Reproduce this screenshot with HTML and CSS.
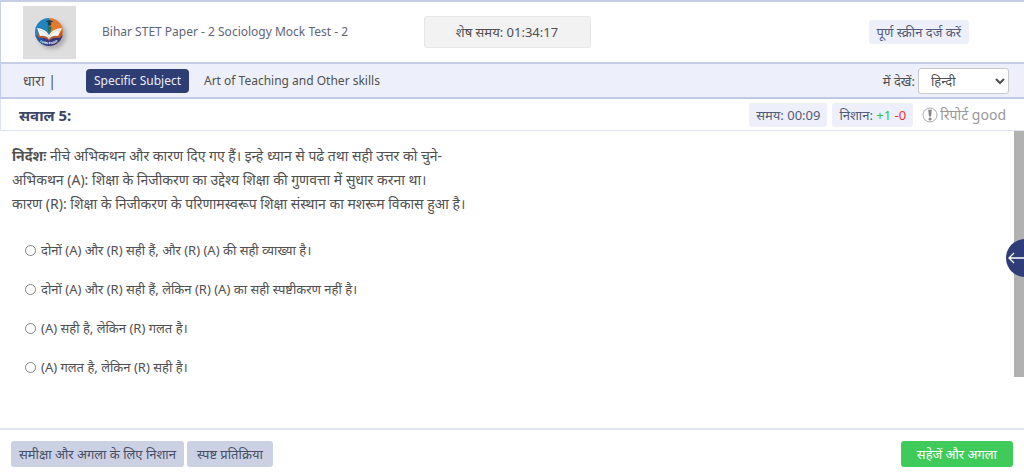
FILE: index.html
```html
<!DOCTYPE html>
<html lang="hi">
<head>
<meta charset="utf-8">
<meta name="viewport" content="width=device-width, initial-scale=1">
<title>Bihar STET Paper - 2 Sociology Mock Test - 2</title>
<link rel="stylesheet" href="styles.css">
</head>
<body>
<header class="topbar">
  <div class="brand">
    <svg class="logo" viewBox="0 0 53 53" role="img" aria-label="Logo">
      <defs>
        <clipPath id="disc"><circle cx="26" cy="26" r="14"/></clipPath>
        <filter id="soft" x="-50%" y="-50%" width="200%" height="200%"><feGaussianBlur stdDeviation="2"/></filter>
        <linearGradient id="base" x1="0" y1="0" x2="1" y2="0"><stop offset="0" stop-color="#2168a8"/><stop offset=".4" stop-color="#303b80"/><stop offset="1" stop-color="#3d3264"/></linearGradient>
      </defs>
      <rect width="53" height="53" fill="#dedede"/>
      <circle cx="29" cy="29" r="14" fill="#77747a" opacity=".5" filter="url(#soft)"/>
      <g clip-path="url(#disc)">
        <path d="M12 12h14v20H12z" fill="#2283be"/>
        <path d="M26 12h15v20H26z" fill="#e5792d"/>
        <path d="M12 29l14 4l15-4v12H12z" fill="url(#base)"/>
        <path d="M14 24l3 6q6-1 9 3q3-4 9-3l4-6v5l-2 3q-8-1-11 3q-3-4-10-3l-2-3z" fill="#b85b3c"/>
        <path d="M14 22q9 1 12 7q3-6 13-7l-4 8q-6-1-9 3q-3-4-9-3z" fill="#faf6f2"/>
        <path d="M16 24q7 1 10 8q3-7 11-8" fill="none" stroke="#c9b9ae" stroke-width=".5"/>
      </g>
      <path d="M22.5 15.5l4-1.5l4 1.5l-4 1.5z" fill="#193f54"/>
      <circle cx="26.5" cy="18" r="1.8" fill="#173d42"/>
      <path d="M24.500 20.500h4l-.5 4l-1.500 4l-1.500-4z" fill="#27715b"/>
      <path id="arc" d="M15 34.500A18 18 0 0 0 37 34.500" fill="none"/>
      <text class="logo-text"><textPath href="#arc" startOffset="50%">LURN PNDIT</textPath></text>
    </svg>
    <h1 class="test-name">Bihar STET Paper - 2 Sociology Mock Test - 2</h1>
  </div>
  <div class="timer">शेष समय: 01:34:17</div>
  <div class="topbar-end"><button class="chip chip-button" type="button">पूर्ण स्क्रीन दर्ज करें</button></div>
</header>
<nav class="sections">
  <span class="sections-label">धारा |</span>
  <button class="tab tab-active" type="button">Specific Subject</button>
  <button class="tab" type="button">Art of Teaching and Other skills</button>
  <label class="view-label" for="lang">में देखें:</label>
  <select class="lang" id="lang"><option>हिन्दी</option><option>English</option></select>
</nav>
<div class="question-bar">
  <h2 class="question-no">सवाल 5:</h2>
  <span class="chip">समय: 00:09</span>
  <span class="chip">निशान: <span class="plus">+1</span> <span class="minus">-0</span></span>
  <button class="report" type="button">
    <svg class="report-icon" viewBox="0 0 16 16" aria-hidden="true"><circle cx="8" cy="8" r="7" fill="none" stroke="#aaa"/><path d="M6.200 2.800h3.600L9 9.600H7z" fill="#858585"/><circle cx="8" cy="12" r="1.500" fill="#858585"/></svg>
    रिपोर्ट good
  </button>
</div>
<main class="content">
  <div class="question">
    <p class="line"><strong>निर्देशः</strong> नीचे अभिकथन और कारण दिए गए हैं। इन्हे ध्यान से पढे तथा सही उत्तर को चुने-</p>
    <p class="line">अभिकथन (A): शिक्षा के निजीकरण का उद्देश्य शिक्षा की गुणवत्ता में सुधार करना था।</p>
    <p class="line">कारण (R): शिक्षा के निजीकरण के परिणामस्वरूप शिक्षा संस्थान का मशरूम विकास हुआ है।</p>
    <div class="options" role="radiogroup" aria-label="सवाल 5">
      <label class="option"><input class="radio" type="radio" name="answer">दोनों (A) और (R) सही हैं, और (R) (A) की सही व्याख्या है।</label>
      <label class="option"><input class="radio" type="radio" name="answer">दोनों (A) और (R) सही हैं, लेकिन (R) (A) का सही स्पष्टीकरण नहीं है।</label>
      <label class="option"><input class="radio" type="radio" name="answer">(A) सही है, लेकिन (R) गलत है।</label>
      <label class="option"><input class="radio" type="radio" name="answer">(A) गलत है, लेकिन (R) सही है।</label>
    </div>
  </div>
  <div class="rail">
    <button class="drawer" type="button" aria-label="Open panel">
      <svg class="drawer-icon" viewBox="0 0 38 38" aria-hidden="true"><path d="M3 19h30M8 14l-5 5l5 5" fill="none" stroke="#fff" stroke-width="1.300"/></svg>
    </button>
  </div>
</main>
<footer class="actions">
  <button class="action" type="button">समीक्षा और अगला के लिए निशान</button>
  <button class="action action-clear" type="button">स्पष्ट प्रतिक्रिया</button>
  <button class="action action-save" type="button">सहेजें और अगला</button>
</footer>
</body>
</html>
```
FILE: styles.css
```css
* { box-sizing: border-box; }
body {
  margin: 0;
  min-height: 100vh;
  display: flex;
  flex-direction: column;
  overflow-x: hidden;
  background: #fff;
  color: #505050;
  font-family: "Noto Sans", "Noto Sans Devanagari", sans-serif;
  font-size: 12px;
  line-height: 16px;
}
button, select { font: inherit; color: inherit; }
button { border: 0; background: none; cursor: pointer; white-space: nowrap; }
h1, h2, p { margin: 0; }

.topbar {
  display: grid;
  grid-template-columns: 1fr 167px 1fr;
  align-items: center;
  height: 64px;
  padding: 0 33px 0 22px;
  border: solid #c6cfe6;
  border-width: 2px 0 2px 1px;
}
.brand { display: flex; align-items: center; gap: 26px; }
.logo { width: 53px; height: 53px; }
.logo-text { font-size: 3px; font-weight: 700; fill: #fff; text-anchor: middle; }
.test-name { font-size: 12px; font-weight: 400; color: #5f6579; white-space: nowrap; }
.timer {
  height: 32px;
  border: 1px solid #e6e6e6;
  border-radius: 3px;
  background: #f2f2f2;
  font-size: 13px;
  line-height: 30px;
  text-align: center;
}
.topbar-end { padding-right: 22px; text-align: right; }
.chip {
  height: 24px;
  padding: 0 7px;
  border-radius: 3px;
  background: #edf0fa;
  color: #525b78;
  line-height: 24px;
  white-space: nowrap;
}
.chip-button { padding: 0 8px; font-size: 13px; }

.sections {
  display: flex;
  align-items: center;
  height: 35px;
  padding: 0 15px 0 22px;
  border: solid #c0cae4;
  border-width: 0 0 2px 1px;
  background: #edf0fa;
}
.sections-label { margin-right: 30px; font-size: 14px; }
.tab { height: 24px; padding: 0 8px; border-radius: 4px; }
.tab-active { margin-right: 7px; background: #2e3d73; color: #e9edfa; }
.view-label { margin-left: auto; margin-right: 3px; font-size: 13px; }
.lang {
  width: 91px;
  height: 26px;
  padding: 0 0 0 8px;
  border: 1px solid #c9c9c9;
  border-radius: 3px;
  background: #fff;
  font-size: 13px;
}

.question-bar {
  display: flex;
  align-items: center;
  gap: 5px;
  height: 32px;
  padding: 0 18px;
  border: solid #dfe3f1;
  border-width: 0 0 1px 1px;
}
.question-no { margin-right: auto; font-size: 15px; font-weight: 700; color: #3c4566; }
.question-bar .chip { font-size: 13px; }
.question-bar .plus { color: #2ec43c; }
.question-bar .minus { color: #ee3232; }
.report { display: flex; align-items: center; gap: 2px; padding: 0 0 0 4px; font-size: 14px; color: #999; }
.report-icon { width: 16px; height: 16px; }

.content { display: flex; flex: 1; }
.question { flex: 1; padding: 13px 12px; }
.line { font-size: 14px; line-height: 24px; }
.options { display: flex; flex-direction: column; gap: 15px; margin-top: 22px; padding-left: 13px; }
.option { display: flex; align-items: center; gap: 5px; font-size: 13px; line-height: 24px; }
.radio {
  appearance: none;
  width: 11px;
  height: 11px;
  margin: 0;
  border: 1px solid #858585;
  border-radius: 50%;
}
.radio:checked { background: #2e3d73; }
.rail {
  position: relative;
  width: 10px;
  margin-bottom: 51px;
  background: #b1b1b1;
}
.drawer {
  position: absolute;
  top: 108px;
  left: -8px;
  width: 38px;
  height: 38px;
  padding: 0;
  border-radius: 50%;
  background: #2e3d78;
}
.drawer-icon { display: block; width: 38px; height: 38px; }

.actions {
  display: flex;
  align-items: flex-start;
  gap: 3px;
  height: 47px;
  padding: 11px 11px 0;
  border-top: 2px solid #e0e5f1;
}
.action {
  height: 26px;
  padding: 0 8px;
  border-radius: 3px;
  background: #cbd1e3;
  color: #474f69;
  font-size: 13px;
}
.action-clear { padding: 0 10px; }
.action-save { margin-left: auto; padding: 0 16px; background: #3ecb59; color: #fff; }
```
